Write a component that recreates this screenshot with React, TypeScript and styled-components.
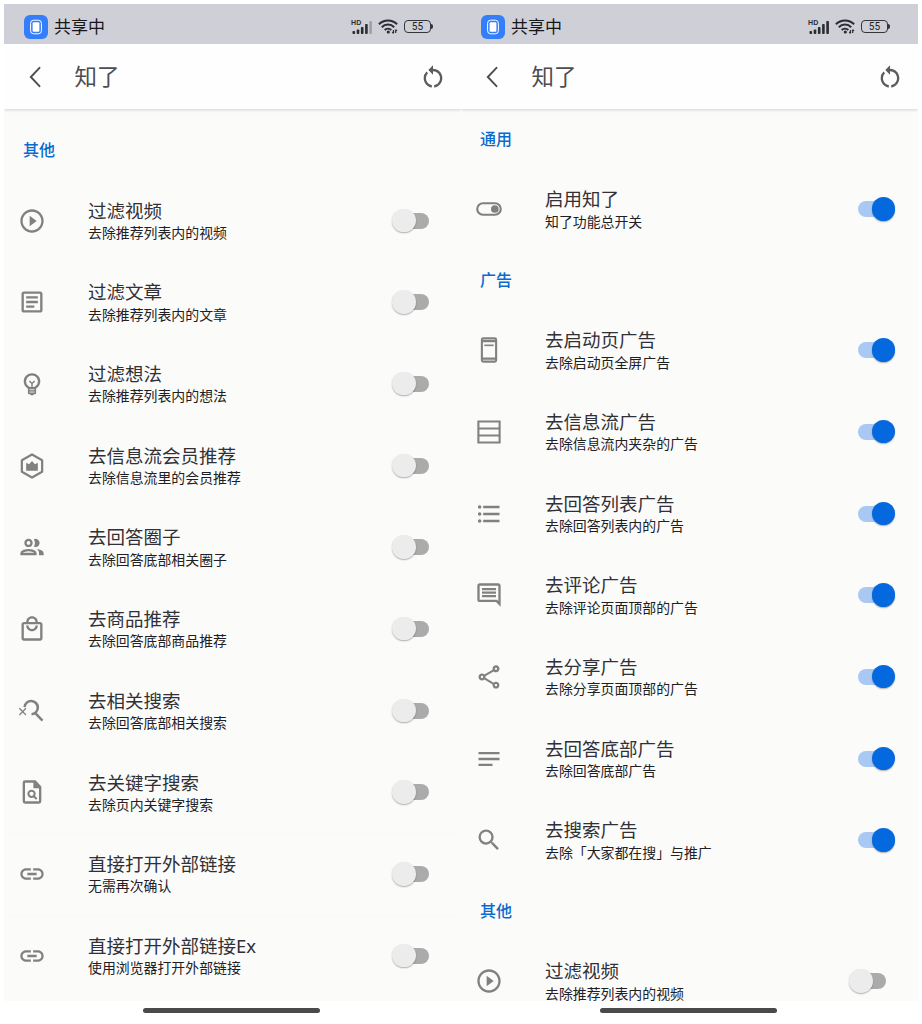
import React from 'react';
import styled, { createGlobalStyle } from 'styled-components';
import {
  MdPlayCircleOutline,
  MdOutlineArticle,
  MdOutlineLocalMall,
  MdLink,
  MdFormatListBulleted,
  MdOutlineComment,
  MdOutlineShare,
  MdNotes,
  MdSearch,
  MdRestartAlt,
} from 'react-icons/md';

const GlobalStyle = createGlobalStyle`
  * { box-sizing: border-box; }
  body {
    margin: 0;
    background: #fff;
    font-family: 'Noto Sans CJK SC', sans-serif;
    overflow: hidden;
  }
`;

const Page = styled.main`
  display: flex;
  width: 922px;
  height: 1024px;
  padding: 4px 4px 0;
  overflow: hidden;
`;

const Phone = styled.section`
  display: flex;
  flex-direction: column;
  width: 457px;
`;

const StatusBar = styled.div`
  display: flex;
  align-items: center;
  flex: none;
  height: 40px;
  padding: 5px 28px 0 20px;
  background: #cfd0d7;
`;

const CastBadge = styled.span`
  display: flex;
  align-items: center;
  justify-content: center;
  width: 24px;
  height: 24px;
  border-radius: 6px;
  background: #347efb;
`;

const CastLabel = styled.span`
  margin-left: 6px;
  padding-bottom: 2px;
  flex: 1;
  font-size: 17px;
  line-height: 24px;
  color: #17171b;
`;

const Signal = styled.span`
  position: relative;
  display: flex;
  width: 22px;
  margin-right: 5px;
`;

const NetworkTag = styled.span`
  position: absolute;
  left: 0;
  top: -1px;
  font: 700 7px/8px 'Liberation Sans', sans-serif;
  letter-spacing: 0.2px;
  color: #2c2d32;
`;

const Battery = styled.span`
  display: flex;
  align-items: center;
  margin-left: 6px;
`;

const BatteryBody = styled.span`
  width: 27px;
  height: 13px;
  border: 1.3px solid #34353a;
  border-radius: 4px;
  font: 400 10px/11.5px Roboto, sans-serif;
  letter-spacing: 0.2px;
  text-align: center;
  color: #202126;
`;

const BatteryNub = styled.span`
  width: 2px;
  height: 5px;
  border-radius: 0 2px 2px 0;
  background: #34353a;
`;

const AppBar = styled.header`
  position: relative;
  display: flex;
  align-items: center;
  flex: none;
  height: 65px;
  padding: 0 14px 0 24px;
  background: #fefefe;
  box-shadow: 0 1px 3px rgba(40, 50, 50, 0.2);
  clip-path: inset(0 0 -6px 0);
  color: #4c4c51;
`;

const AppTitle = styled.h1`
  flex: 1;
  margin: 0 0 0 28.500px;
  padding-bottom: 4px;
  font-size: 22.5px;
  font-weight: 400;
  line-height: 30px;
`;

const Content = styled.div<{ $offset: number }>`
  flex: none;
  height: 892px;
  padding-top: ${(p) => p.$offset}px;
  background: #fbfbfa;
  overflow: hidden;
`;

const Category = styled.h2`
  display: flex;
  align-items: center;
  height: 59.3px;
  margin: 0;
  padding: 0 0 2px 19px;
  font-size: 16px;
  font-weight: 500;
  line-height: 24px;
  color: #096ad0;
`;

const Row = styled.div<{ $divided?: boolean }>`
  display: flex;
  align-items: center;
  height: 81.7px;
  padding: 0 32px 0 14px;
  box-shadow: ${(p) => (p.$divided ? 'inset 0 1px #f8f8f7' : 'none')};
`;

const IconSlot = styled.span`
  display: flex;
  width: 28px;
  height: 28px;
  color: #818181;
`;

const Labels = styled.div`
  flex: 1;
  margin-left: 42px;
  padding-bottom: 4px;
  white-space: nowrap;
`;

const Title = styled.div`
  padding-top: 1.6px;
  font-family: 'Noto Sans', 'Noto Sans CJK SC', sans-serif;
  font-size: 18.5px;
  line-height: 26px;
  color: #303036;
`;

const Summary = styled.div`
  margin-top: -0.8px;
  font-size: 13.9px;
  line-height: 18px;
  color: #202024;
`;

const Track = styled.span<{ $on: boolean }>`
  position: relative;
  width: 28px;
  height: 16px;
  border-radius: 8px;
  background: ${(p) => (p.$on ? '#a9c9f4' : '#ababab')};
`;

const Thumb = styled.span<{ $on: boolean }>`
  position: absolute;
  top: -4px;
  left: ${(p) => (p.$on ? '13.5px' : '-9px')};
  width: 23.5px;
  height: 23.5px;
  border-radius: 50%;
  background: ${(p) => (p.$on ? '#0468de' : '#ececec')};
  box-shadow: 0 1px 1.5px rgba(0, 0, 0, 0.3);
`;

const GestureArea = styled.div`
  display: flex;
  justify-content: center;
  padding: 7px 3px 0 0;
`;

const GestureBar = styled.span`
  width: 177px;
  height: 5px;
  border-radius: 3px;
  background: #4a4a4d;
`;

const Glyph = ({ children }: { children: React.ReactNode }) => (
  <svg width="28" height="28" viewBox="0 0 24 24" fill="none" stroke="currentColor" strokeWidth="2">
    {children}
  </svg>
);

const BulbIcon = () => (
  <Glyph>
    <path d="M9.400 15.300a6.100 6.100 0 1 1 5.200 0" />
    <path d="M8.500 14.600h7v5.200a1 1 0 0 1-1 1h-.9l-.5.9h-2.200l-.5-.9h-.9a1 1 0 0 1-1-1z" fill="currentColor" stroke="none" />
    <path d="M9.900 16.900h4.200M9.900 18.900h4.200" stroke="#fbfbfa" strokeWidth="0.700" />
    <path d="M9.800 9.400l2.200 2.200 2.200-2.200M12 11.600v3.400" strokeWidth="1.200" />
  </Glyph>
);

const MemberIcon = () => (
  <Glyph>
    <path d="M12 2.100l8.700 4.900v10L12 21.900 3.300 17V7z" strokeWidth="1.900" strokeLinejoin="round" />
    <path d="M7 9.200l2.500 1.400L12 7.700l2.500 2.900L17 9.200v6.900H7z" fill="currentColor" stroke="none" />
  </Glyph>
);

const PeopleIcon = () => (
  <Glyph>
    <circle cx="9" cy="8.500" r="2.600" />
    <path d="M3 18v-.7c0-1.600 3.700-2.600 6-2.600s6 1 6 2.600v.7z" />
    <path
      d="M16.040 13.810c1.160.84 1.960 1.960 1.960 3.440V19h4v-1.750c0-2.020-3.500-3.170-5.960-3.440zM15 12a3.500 3.500 0 1 0-1.500-6.650c.63.89 1 1.980 1 3.150s-.37 2.260-1 3.150c.46.22.96.35 1.500.35z"
      fill="currentColor"
      stroke="none"
    />
  </Glyph>
);

const SearchOffIcon = () => (
  <Glyph>
    <path d="M5.600 8.600a5.700 5.700 0 1 1 6 6.200M14.200 13.200l6.800 7" strokeWidth="2.200" />
    <path d="M1.200 9.600l5.600 5.800M6.800 9.600l-5.600 5.800" strokeWidth="1.100" />
  </Glyph>
);

const PageSearchIcon = () => (
  <Glyph>
    <path d="M14.600 3H6a1 1 0 0 0-1 1v16a1 1 0 0 0 1 1h12a1 1 0 0 0 1-1V7.600z" />
    <path d="M13.200 2.600v6.200h6z" fill="currentColor" stroke="none" />
    <circle cx="11.600" cy="13.600" r="2.700" strokeWidth="1.700" />
    <path d="M13.400 15.400l2.600 2.600" strokeWidth="1.700" />
  </Glyph>
);

const ToggleIcon = () => (
  <Glyph>
    <rect x="1.900" y="7.100" width="20.200" height="9.800" rx="4.900" strokeWidth="1.800" />
    <circle cx="17" cy="12" r="3.300" fill="currentColor" stroke="none" />
  </Glyph>
);

const SplashIcon = () => (
  <Glyph>
    <rect x="5.900" y="2" width="12.200" height="20" rx="1.200" strokeWidth="1.800" />
    <path d="M6 4.400h12M6 19.300h12" strokeWidth="1.900" />
    <path d="M8 8h8" strokeWidth="1.400" />
  </Glyph>
);

const FeedIcon = () => (
  <Glyph>
    <path d="M2.900 3h18.200v18H2.900zM3 9h18M3 15h18" strokeWidth="1.800" />
  </Glyph>
);

type Item = { icon: React.ReactNode; title: string; summary: string; on?: boolean; divided?: boolean };
type Group = { name: string; items: Item[] };

const filterVideo: Item = {
  icon: <MdPlayCircleOutline size={28} />,
  title: '过滤视频',
  summary: '去除推荐列表内的视频',
};

const otherGroups: Group[] = [
  {
    name: '其他',
    items: [
      filterVideo,
      { icon: <MdOutlineArticle size={28} />, title: '过滤文章', summary: '去除推荐列表内的文章' },
      { icon: <BulbIcon />, title: '过滤想法', summary: '去除推荐列表内的想法' },
      { icon: <MemberIcon />, title: '去信息流会员推荐', summary: '去除信息流里的会员推荐' },
      { icon: <PeopleIcon />, title: '去回答圈子', summary: '去除回答底部相关圈子' },
      { icon: <MdOutlineLocalMall size={28} />, title: '去商品推荐', summary: '去除回答底部商品推荐' },
      { icon: <SearchOffIcon />, title: '去相关搜索', summary: '去除回答底部相关搜索' },
      { icon: <PageSearchIcon />, title: '去关键字搜索', summary: '去除页内关键字搜索' },
      { icon: <MdLink size={28} />, title: '直接打开外部链接', summary: '无需再次确认', divided: true },
      { icon: <MdLink size={28} />, title: '直接打开外部链接Ex', summary: '使用浏览器打开外部链接', divided: true },
    ],
  },
];

const mainGroups: Group[] = [
  {
    name: '通用',
    items: [{ icon: <ToggleIcon />, title: '启用知了', summary: '知了功能总开关', on: true }],
  },
  {
    name: '广告',
    items: [
      { icon: <SplashIcon />, title: '去启动页广告', summary: '去除启动页全屏广告', on: true },
      { icon: <FeedIcon />, title: '去信息流广告', summary: '去除信息流内夹杂的广告', on: true },
      { icon: <MdFormatListBulleted size={28} />, title: '去回答列表广告', summary: '去除回答列表内的广告', on: true },
      { icon: <MdOutlineComment size={28} />, title: '去评论广告', summary: '去除评论页面顶部的广告', on: true },
      { icon: <MdOutlineShare size={28} />, title: '去分享广告', summary: '去除分享页面顶部的广告', on: true },
      { icon: <MdNotes size={28} />, title: '去回答底部广告', summary: '去除回答底部广告', on: true },
      { icon: <MdSearch size={28} />, title: '去搜索广告', summary: '去除「大家都在搜」与推广', on: true },
    ],
  },
  { name: '其他', items: [filterVideo] },
];

const Screen = ({ groups, offset, weakSignal }: { groups: Group[]; offset: number; weakSignal?: boolean }) => (
  <Phone>
    <StatusBar>
      <CastBadge>
        <svg width="14" height="16" viewBox="0 0 14 16" fill="none">
          <rect x="1.600" y="1.200" width="10.800" height="13.600" rx="3" stroke="#fff" strokeWidth="1" />
          <rect x="3.600" y="3.200" width="6.800" height="9.600" rx="1" fill="#fff" />
        </svg>
      </CastBadge>
      <CastLabel>共享中</CastLabel>
      <Signal>
        <NetworkTag>HD</NetworkTag>
        <svg width="22" height="14" viewBox="0 0 22 14" fill="#2c2d32">
          <rect x="1.500" y="11" width="2.600" height="3" rx="0.800" />
          <rect x="5.700" y="9.500" width="2.600" height="4.500" rx="0.800" />
          <rect x="9.900" y="7" width="2.600" height="7" rx="0.800" />
          <rect x="14.100" y="4" width="2.600" height="10" rx="0.800" />
          <rect x="18.300" y="1" width="2.600" height="13" rx="0.800" fill={weakSignal ? '#9fa0a6' : '#2c2d32'} />
        </svg>
      </Signal>
      <svg width="20" height="15" viewBox="0 0 20 15" fill="none" stroke="#2c2d32" strokeWidth="2">
        <path d="M0.900 5.300a12.600 12.600 0 0 1 18.200 0M3.800 8.200a8.600 8.600 0 0 1 12.400 0M6.700 11a4.700 4.700 0 0 1 6.600 0" />
        <circle cx="10.300" cy="13" r="1.600" fill="#2c2d32" stroke="none" />
        <path d="M15.500 11v3.500M17.700 10.500v3.500M14.200 13l1.300 1.300M19 11.900l-1.300-1.300" strokeWidth="1.200" />
      </svg>
      <Battery>
        <BatteryBody>55</BatteryBody>
        <BatteryNub />
      </Battery>
    </StatusBar>
    <AppBar>
      <svg width="18" height="24" viewBox="0 0 18 24" fill="none" stroke="currentColor" strokeWidth="1.900">
        <path d="M11.500 2.800L2.800 12l8.700 9.200" strokeLinecap="round" />
      </svg>
      <AppTitle>知了</AppTitle>
      <MdRestartAlt size={28} color="#5c5c5e" />
    </AppBar>
    <Content $offset={offset}>
      {groups.map((group) => (
        <React.Fragment key={group.name}>
          <Category>{group.name}</Category>
          {group.items.map((item) => (
            <Row key={item.title} $divided={item.divided}>
              <IconSlot>{item.icon}</IconSlot>
              <Labels>
                <Title>{item.title}</Title>
                <Summary>{item.summary}</Summary>
              </Labels>
              <Track $on={!!item.on}>
                <Thumb $on={!!item.on} />
              </Track>
            </Row>
          ))}
        </React.Fragment>
      ))}
    </Content>
    <GestureArea>
      <GestureBar />
    </GestureArea>
  </Phone>
);

export default function App() {
  return (
    <>
      <GlobalStyle />
      <Page>
        <Screen groups={otherGroups} offset={11.4} weakSignal />
        <Screen groups={mainGroups} offset={0} />
      </Page>
    </>
  );
}
